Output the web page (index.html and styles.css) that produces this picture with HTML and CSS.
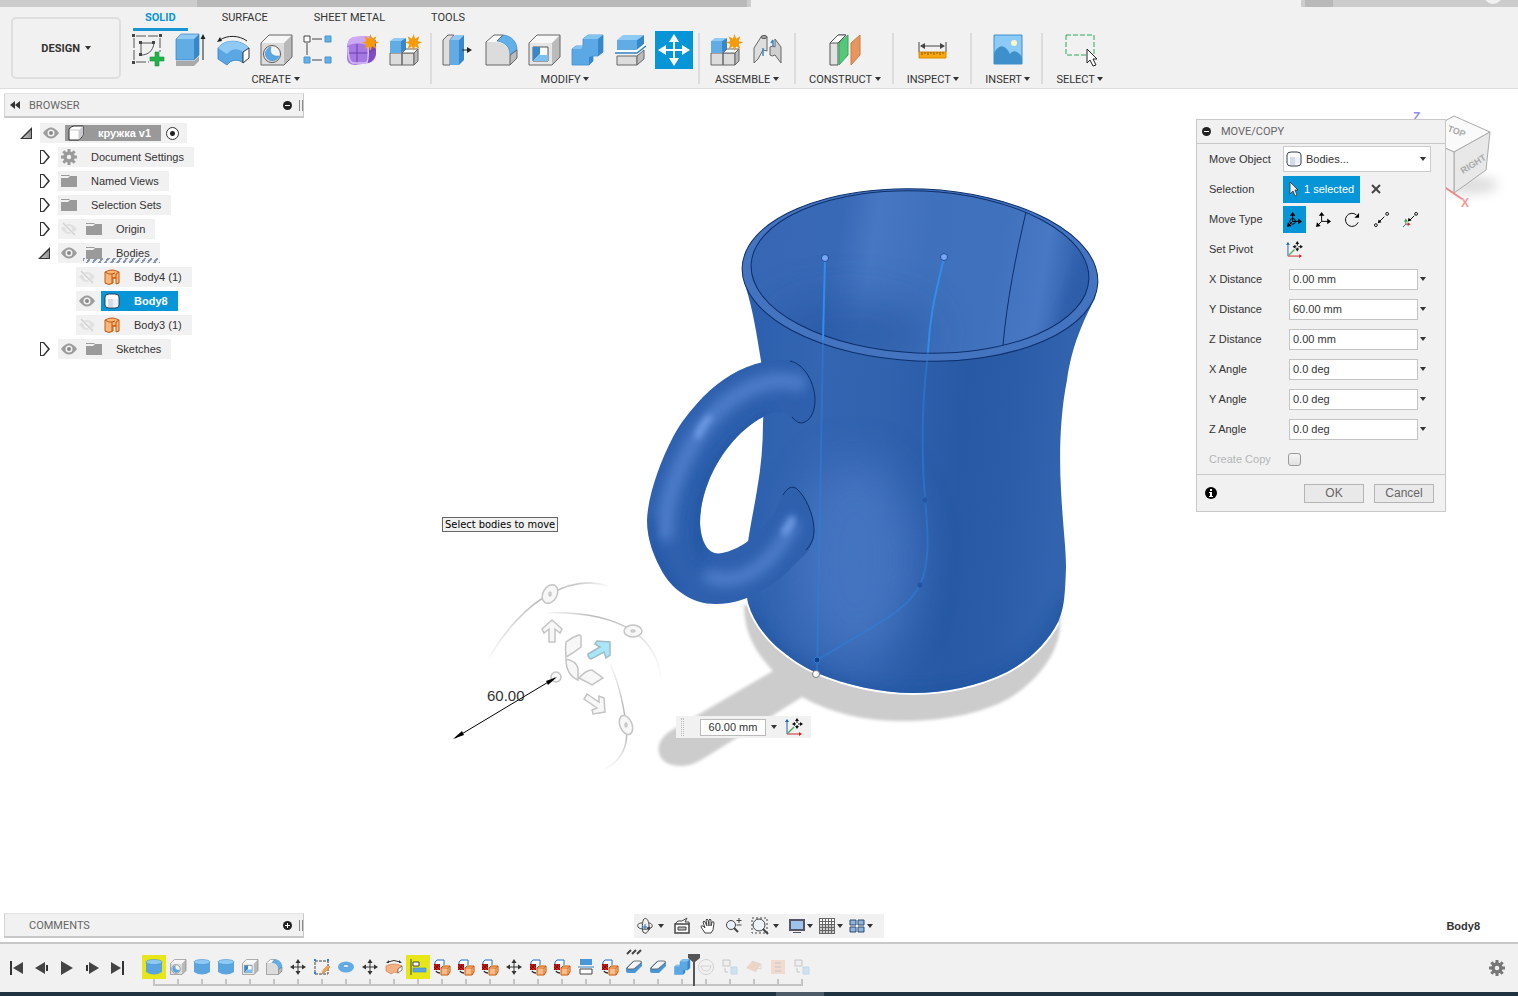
FILE: index.html
```html
<!DOCTYPE html>
<html lang="en">
<head>
    <meta charset="UTF-8">
    <meta name="viewport" content="width=device-width, initial-scale=1.0">
    <title>кружка v1</title>
    <link rel="stylesheet" href="styles.css">
</head>
<body>
    <!-- Icon sprite -->
    <svg class="sprite" width="0" height="0" aria-hidden="true">
        <symbol id="i-sketch" viewBox="0 0 32 32">
            <path d="M5 2h23M3 4v23M5 28h13M29 4v14" fill="none" stroke="#555" stroke-dasharray="10 2"/>
            <path d="M10 9h13M10 9v12M10 21c7 0 12-4 13-12" fill="none" stroke="#555"/>
            <path d="M1 0h3v3H1zM28 0h3v3h-3zM1 27h3v3H1zM8 7h3v3H8zM21 7h3v3h-3zM8 19h3v3H8z" fill="#444"/>
            <path d="M24 18h4v5h5v4h-5v5h-4v-5h-5v-4h5z" fill="#22b14c" stroke="#15933a" stroke-width=".6"/>
        </symbol>
        <symbol id="i-extrude" viewBox="0 0 32 32">
            <path d="M2 27h18l5-5v5l-5 5H2z" fill="#a9a9a9"/>
            <path d="M2 5h18v21H2z" fill="#62ace6"/>
            <path d="M2 5l5-5h18l-5 5z" fill="#8fcaf5"/>
            <path d="M20 5l5-5v21l-5 5z" fill="#3787cb"/>
            <path d="M2 5l5-5h18v21l-5 5H2z" fill="none" stroke="#3580c0" stroke-width=".7"/>
            <path d="M29 3v23" stroke="#222"/><path d="M29 0l2.500 5h-5z" fill="#222"/>
        </symbol>
        <symbol id="i-revolve" viewBox="0 0 32 32">
            <path d="M1 14C8 5 23 5 32 14l-6 4v11c-4-4-12-4-16 2L1 25z" fill="#5aa7e4" stroke="#2f7fc0" stroke-width=".8"/>
            <path d="M1 14C8 5 23 5 32 14l-6 4c-4-4-12-4-16 2z" fill="#8fcaf5"/>
            <path d="M26 18l6-4v10l-6 5z" fill="#fff" stroke="#333"/>
            <path d="M3 6C10 1 22 1 30 7" fill="none" stroke="#222"/><path d="M0 8l3-5 2 4z" fill="#222"/>
        </symbol>
        <symbol id="i-hole" viewBox="0 0 32 32">
            <path d="M1 9h23v22H1z" fill="#dcdcdc"/><path d="M1 9l8-8h23l-8 8z" fill="#f6f6f6"/><path d="M24 9l8-8v22l-8 8z" fill="#b9b9b9"/>
            <path d="M1 9l8-8h23v22l-8 8H1z" fill="none" stroke="#666"/>
            <circle cx="12" cy="20" r="8.500" fill="#f3f3f3" stroke="#555"/>
            <path d="M11 13a7 7 0 1 0 8 9c-7 1-10-4-8-9z" fill="#5aa7e4" stroke="#2f7fc0" stroke-width=".5"/>
        </symbol>
        <symbol id="i-pattern" viewBox="0 0 32 32">
            <path d="M9 5h10M9 26h10M4 9v12" stroke="#444"/>
            <path d="M1 2h6v6H1z" fill="#fff" stroke="#444"/>
            <path d="M22 2h6v6h-6zM1 23h6v6H1zM22 23h6v6h-6z" fill="#62b0ea" stroke="#4a94cf"/>
        </symbol>
        <symbol id="i-star" viewBox="0 0 16 16">
            <path d="M8 0l1.500 4.500L13.500 2l-1.500 4.500 4 1.500-4 1.500 1.500 4.500-4-2.500L8 16l-1.500-4.500-4 2.500L4 9.500 0 8l4-1.500L2.500 2l4 2.500z" fill="#f59a0b"/>
        </symbol>
        <symbol id="i-form" viewBox="0 0 32 32">
            <path d="M1 12Q2 4 8 3l14-1q8 1 8 9v10q-1 6-7 8l-14 2q-8 0-8-7z" fill="#a678e2"/>
            <path d="M1 12Q2 4 8 3l14-1q4 1 5 4l-6 5Q10 7 1 12z" fill="#cda9f5"/>
            <path d="M22 11l8-5v14q-2 7-8 9z" fill="#7d4cc0"/>
            <path d="M11 10v20M2 19h19l8-4" fill="none" stroke="#6b3eae"/>
            <path d="M2 13q0 15 5 16h13q3-1 2-18" fill="none" stroke="#d9bff8" stroke-width="1.500"/>
            <use href="#i-star" x="16" y="0" width="17" height="17"/>
        </symbol>
        <symbol id="i-component" viewBox="0 0 32 32">
            <path d="M1 19h12v12H1zM13 19h12v12H13z" fill="#dcdcdc" stroke="#666"/>
            <path d="M13 19l4-4h12l-4 4z" fill="#fff" stroke="#666"/><path d="M25 19l4-4v12l-4 4z" fill="#b9b9b9" stroke="#666"/>
            <path d="M1 7h11v12H1z" fill="#62ace6"/><path d="M1 7l4-3h12l-5 3z" fill="#8fcaf5"/><path d="M12 7l5-3v11l-5 4z" fill="#3787cb"/>
            <use href="#i-star" x="16" y="0" width="17" height="17"/>
        </symbol>
        <symbol id="i-presspull" viewBox="0 0 32 32">
            <path d="M1 6l5-5h6L8 6v25H1z" fill="#dedede" stroke="#666"/>
            <path d="M8 6h9v25H8z" fill="#62ace6"/><path d="M8 6l5-5h9l-5 5z" fill="#8fcaf5"/><path d="M17 6l5-5v25l-5 5z" fill="#3787cb"/>
            <path d="M20 16h8" stroke="#222"/><path d="M30 16l-5-3v6z" fill="#222"/>
        </symbol>
        <symbol id="i-fillet" viewBox="0 0 32 32">
            <path d="M1 8h9c9 0 15 7 15 14v9H1z" fill="#dcdcdc"/><path d="M1 8l8-7h9l-6 7z" fill="#f8f8f8"/>
            <path d="M25 21l7-5v8l-7 7z" fill="#bbb"/>
            <path d="M12 7l6-6c9 1 14 7 14 15l-7 5C25 13 20 8 12 7z" fill="#62b0ea" stroke="#3787cb" stroke-width=".7"/>
            <path d="M12 7l6-6H9L1 8v23h24l7-7v-8l-7 5v10" fill="none" stroke="#666"/>
        </symbol>
        <symbol id="i-shell" viewBox="0 0 32 32">
            <path d="M1 9h23v22H1z" fill="#e6e6e6"/><path d="M1 9l8-8h23l-8 8z" fill="#f8f8f8"/><path d="M24 9l8-8v22l-8 8z" fill="#bbb"/>
            <path d="M1 9l8-8h23v22l-8 8H1z" fill="none" stroke="#666"/>
            <path d="M5 13h15v14H5z" fill="#fff" stroke="#555"/><path d="M5 13h7v7l-7 7z" fill="#3787cb"/><path d="M5 27l6-6h9v6z" fill="#7cc0f2"/>
        </symbol>
        <symbol id="i-combine" viewBox="0 0 32 32">
            <path d="M1 15l4-3h7V5l5-4h15v17l-5 4h-5v5l-4 4H1z" fill="#5ba8e4" stroke="#3f8fd2" stroke-width=".8"/>
            <path d="M12 5l5-4h15l-5 4zM1 15l4-3h7l-2 3z" fill="#83c3f2"/>
            <path d="M27 5l5-4v17l-5 4zM18 23l4-1v5l-4 4z" fill="#3787cb"/>
        </symbol>
        <symbol id="i-split" viewBox="0 0 32 32">
            <path d="M3 6h20v10H3z" fill="#62ace6"/><path d="M3 6l6-5h21l-7 5z" fill="#8fcaf5"/><path d="M23 6l7-5v9l-7 6z" fill="#3787cb"/>
            <path d="M1 18h22l9-7" fill="none" stroke="#fff" stroke-width="4"/>
            <path d="M1 19h22l9-7" fill="none" stroke="#2f7fc0" stroke-width="1.500"/>
            <path d="M3 22h20v9H3z" fill="#dcdcdc" stroke="#666"/><path d="M23 22l7-6v9l-7 6z" fill="#bbb" stroke="#666"/>
        </symbol>
        <symbol id="i-move" viewBox="0 0 32 32">
            <path d="M16 5v22M5 16h22" stroke="currentColor" stroke-width="2"/>
            <path d="M16 0l5 8H11zM16 32l5-8H11zM0 16l8-5v10zM32 16l-8-5v10z" fill="currentColor"/>
        </symbol>
        <symbol id="i-joint" viewBox="0 0 32 32">
            <path d="M1 14l7-11q3-3 6 0v14l-4-1-5 9-4 4z" fill="#dedede" stroke="#666"/>
            <ellipse cx="11" cy="3" rx="3" ry="1.500" fill="#aaa" stroke="#555"/>
            <path d="M17 13q3-2 5 0V5l6 8v16l-6-8q-3 2-5 0z" fill="#cfcfcf" stroke="#666"/>
            <path d="M10 14v8M20 6v7M18 9l2-3" fill="none" stroke="#3787cb" stroke-width="1.500"/>
        </symbol>
        <symbol id="i-plane" viewBox="0 0 32 32">
            <path d="M1 9l8-8h8l-8 8v22H1z" fill="#e2e2e2" stroke="#555"/><path d="M1 9l8-8h8l-8 8z" fill="#fff" stroke="#555"/>
            <path d="M10 9l9-8v20l-9 10z" fill="#53c77a" stroke="#36a75c"/>
            <path d="M22 9l9-8v20l-9 10z" fill="#e8965f" stroke="#cf7b43"/>
        </symbol>
        <symbol id="i-measure" viewBox="0 0 32 32">
            <path d="M2 8v10M29 8v10M4 12h23" stroke="#444"/><path d="M3 12l5-3v6zM28 12l-5-3v6z" fill="#444"/>
            <path d="M2 18h27v6H2z" fill="#f7a70a" stroke="#d98b00"/><path d="M5 18v3M8 18v2M11 18v3M14 18v2M17 18v3M20 18v2M23 18v3M26 18v2" stroke="#8a5500"/>
        </symbol>
        <symbol id="i-image" viewBox="0 0 32 32">
            <path d="M2 1h28v29H2z" fill="#8ccaf8"/><circle cx="22" cy="9" r="3" fill="#fdf6c6"/>
            <path d="M2 19c5-9 11-9 16 1 3-4 7-4 12 3v7H2z" fill="#3e90cc"/><path d="M2 1h28v29H2z" fill="none" stroke="#3e90cc"/>
        </symbol>
        <symbol id="i-select" viewBox="0 0 32 32">
            <path d="M2 1h28v20H2z" fill="none" stroke="#2fa85a" stroke-dasharray="5 2"/>
            <path d="M23 15v14l3-3 3 6 3-1-3-6h4z" fill="#fff" stroke="#222"/>
        </symbol>
        <symbol id="i-eye" viewBox="0 0 16 16">
            <path d="M0 8q8-11 16 0-8 11-16 0z" fill="#9c9c9c"/><circle cx="8" cy="8" r="3.500" fill="#f1f1f1"/><circle cx="8" cy="8" r="2" fill="#8a8a8a"/>
        </symbol>
        <symbol id="i-eyeoff" viewBox="0 0 16 16">
            <path d="M0 8q8-10 16 0-8 10-16 0z" fill="#e0e0e0"/><circle cx="8" cy="8" r="3" fill="#f1f1f1"/><path d="M2 3l12 11" stroke="#f1f1f1" stroke-width="3"/><path d="M2 2l12 12" stroke="#d2d2d2" stroke-width="1.500"/>
        </symbol>
        <symbol id="i-folder" viewBox="0 0 16 16">
            <path d="M0 2h8l1 1H0zM0 5h7l2-2h7v11H0z" fill="#9a9a9a"/>
        </symbol>
        <symbol id="i-gear" viewBox="0 0 16 16">
            <circle cx="8" cy="8" r="4" fill="none" stroke="currentColor" stroke-width="3.500"/>
            <path d="M8 0v3M8 13v3M0 8h3M13 8h3M2.300 2.300l2.200 2.200M11.500 11.500l2.200 2.200M2.300 13.700l2.200-2.200M11.500 4.500l2.200-2.200" stroke="currentColor" stroke-width="3"/>
        </symbol>
        <symbol id="i-cube" viewBox="0 0 16 16">
            <path d="M1 4q3-3 5-3h9v9q-2 4-4 5H1z" fill="#fff" stroke="#333"/><path d="M11 5l4-4v9l-4 5z" fill="#c9c9d2"/><path d="M2 5h9v9" fill="none" stroke="#ccc"/>
        </symbol>
        <symbol id="i-body" viewBox="0 0 16 16">
            <path d="M1 4q0-3 4-3h6q4 0 4 3v8q0 3-4 3H5q-4 0-4-3z" fill="#fff" stroke="#333f50"/><path d="M4 6h5v8H4z" fill="#d5dbe6"/><path d="M9 6h5v6l-5 2z" fill="#edf0f6"/>
        </symbol>
        <symbol id="i-surface" viewBox="0 0 16 16">
            <path d="M1 3q7-4 14 0v11l-3 1V9H9v5q-4 3-8 0z" fill="#f9b77b" stroke="#c9560a"/><path d="M1 3q4 3 7 2v9M8 9h4V5l3-2M8 5l3-1" fill="none" stroke="#c9560a"/>
        </symbol>
        <symbol id="i-cyl" viewBox="0 0 16 16">
            <path d="M0 3v10q8 5 16 0V3z" fill="#5aa5e0"/><ellipse cx="8" cy="3" rx="8" ry="2.500" fill="#8fcaf5" stroke="#4a94cf" stroke-width=".6"/>
        </symbol>
        <symbol id="i-sketchedit" viewBox="0 0 16 16">
            <path d="M1 2h13v13H1z" fill="none" stroke="#444" stroke-dasharray="3 1"/><path d="M0 0h2v2H0zM13 0h2v2h-2zM0 13h2v2H0z" fill="#2f7fd0"/><path d="M8 15l1-4 5-5 2 2-5 5z" fill="#f5a54a" stroke="#d57b55" stroke-width=".6"/>
        </symbol>
        <symbol id="i-torus" viewBox="0 0 16 16">
            <ellipse cx="8" cy="8" rx="8" ry="5.500" fill="#62ace6"/><ellipse cx="8" cy="7" rx="3" ry="1.500" fill="#f1f1f1" stroke="#3787cb" stroke-width=".7"/>
        </symbol>
        <symbol id="i-sweep" viewBox="0 0 16 16">
            <path d="M0 7q8-4 16 0l-4 3v4q-4-2-7 1l-5-3z" fill="#f4b183" stroke="#d98046" stroke-width=".7"/><path d="M12 10l4-3v4l-4 3z" fill="#fff" stroke="#555" stroke-width=".7"/><path d="M2 3q6-3 12 0" fill="none" stroke="#333"/><path d="M0 4l3-3v3zM16 4l-3-3v3z" fill="#333"/>
        </symbol>
        <symbol id="i-align" viewBox="0 0 16 16">
            <path d="M1 0v16" stroke="#444"/><path d="M3 3h6v4H3z" fill="#fff" stroke="#444"/><path d="M3 9h13v4H3z" fill="#5aa5e0" stroke="#3787cb" stroke-width=".6"/>
        </symbol>
        <symbol id="i-copy" viewBox="0 0 16 16">
            <path d="M1 5V3l2-2h7v5" fill="#fff" stroke="#1f6fc0"/>
            <path d="M0 5h6v6H0z" fill="#e01818"/><path d="M0 5l6 6M6 5l-6 6M0 8l3 3M3 5l3 3" stroke="#3a0505" stroke-width=".7"/>
            <path d="M7 9l2-2h7v6l-2 3H7z" fill="#f9bb88" stroke="#c9560a"/><path d="M7 9h7v7M14 9l2-2" fill="none" stroke="#c9560a" stroke-width=".7"/><path d="M2 12q1 2 4 2" fill="none" stroke="#222" stroke-width="1.500"/>
        </symbol>
        <symbol id="i-splitface" viewBox="0 0 16 16">
            <path d="M2 0h12v6H2z" fill="#4a97d8"/><path d="M0 8h16" stroke="#3787cb"/><path d="M2 10h12v5H2z" fill="#fff" stroke="#444"/>
        </symbol>
        <symbol id="i-slab" viewBox="0 0 16 16">
            <path d="M0 9l7-7h7q2 0 2 2v3l-7 7H2q-2 0-2-2z" fill="#4a97d8"/><path d="M1 9l7-7h6q2 0 1 2L9 9q-1 1-2 1H2q-1 0-1-1z" fill="#f4f4f4" stroke="#555" stroke-width=".8"/>
        </symbol>
        <symbol id="i-face" viewBox="0 0 16 16">
            <circle cx="8" cy="8" r="7.500" fill="none" stroke="#999"/><path d="M3 7h10q-1 5-5 5T3 7z" fill="none" stroke="#999"/>
        </symbol>
        <symbol id="i-newcomp" viewBox="0 0 16 16">
            <path d="M1 1h7v6H1z" fill="#eee" stroke="#777"/><path d="M3 9v4h3" fill="none" stroke="#777"/><path d="M9 8h6v7H9z" fill="#8cc5ee" stroke="#6aaee0"/>
        </symbol>
        <symbol id="i-patch" viewBox="0 0 16 16">
            <path d="M0 9l6-7 9 3-5 8z" fill="#e3a47b"/><path d="M6 2l9 3v5l-4-1" fill="none" stroke="#aaa"/>
        </symbol>
        <symbol id="i-rib" viewBox="0 0 16 16">
            <path d="M1 1h14v14H1z" fill="#f2b58f"/><path d="M5 4h6M5 8h6M5 12h6" stroke="#777"/>
        </symbol>
        <symbol id="i-pivot" viewBox="0 0 16 16">
            <path d="M1 1v14" stroke="#1565c0"/><path d="M1 0l2 3H-1z" fill="#1565c0"/><path d="M1 15h13" stroke="#c62828"/><path d="M16 15l-3-2v4z" fill="#c62828"/><path d="M2 14l6-6" stroke="#4caf50" stroke-width="1.500"/>
            <path d="M11 0v9M7 5h9" stroke="#111"/><path d="M11-1l2 3H9zM11 10l2-3H9zM6 5l3-2v4zM17 5l-3-2v4z" fill="#111"/><path d="M10 4h2v2h-2z" fill="#fff"/>
        </symbol>
    </svg>

    <div class="window-tabs">
        <span class="tab-first"></span>
        <span class="tab-second"></span>
        <span class="tab-gap"></span>
        <span class="tab-active"></span>
        <span class="tab-gap"></span>
        <span class="tab-new"></span>
        <span class="tab-rest"><i class="avatar"></i></span>
    </div>

    <header class="ribbon">
        <button class="workspace" type="button">DESIGN <i class="caret"></i></button>
        <div class="tools">
            <nav class="tabs">
                <a href="#" class="active">SOLID</a>
                <a href="#">SURFACE</a>
                <a href="#">SHEET METAL</a>
                <a href="#">TOOLS</a>
            </nav>
            <div class="groups">
                <section class="group">
                    <div class="icons">
                        <button aria-label="Create Sketch"><svg><use href="#i-sketch"/></svg></button>
                        <button aria-label="Extrude"><svg><use href="#i-extrude"/></svg></button>
                        <button aria-label="Revolve"><svg><use href="#i-revolve"/></svg></button>
                        <button aria-label="Hole"><svg><use href="#i-hole"/></svg></button>
                        <button aria-label="Pattern"><svg><use href="#i-pattern"/></svg></button>
                        <button aria-label="Create Form"><svg><use href="#i-form"/></svg></button>
                        <button aria-label="Derive"><svg><use href="#i-component"/></svg></button>
                    </div>
                    <button class="menu">CREATE <i class="caret"></i></button>
                </section>
                <section class="group">
                    <div class="icons">
                        <button aria-label="Press Pull"><svg><use href="#i-presspull"/></svg></button>
                        <button aria-label="Fillet"><svg><use href="#i-fillet"/></svg></button>
                        <button aria-label="Shell"><svg><use href="#i-shell"/></svg></button>
                        <button aria-label="Combine"><svg><use href="#i-combine"/></svg></button>
                        <button aria-label="Split Body"><svg><use href="#i-split"/></svg></button>
                        <button aria-label="Move/Copy" class="on"><svg><use href="#i-move"/></svg></button>
                    </div>
                    <button class="menu">MODIFY <i class="caret"></i></button>
                </section>
                <section class="group">
                    <div class="icons">
                        <button aria-label="New Component"><svg><use href="#i-component"/></svg></button>
                        <button aria-label="Joint"><svg><use href="#i-joint"/></svg></button>
                    </div>
                    <button class="menu">ASSEMBLE <i class="caret"></i></button>
                </section>
                <section class="group single">
                    <div class="icons"><button aria-label="Offset Plane"><svg><use href="#i-plane"/></svg></button></div>
                    <button class="menu">CONSTRUCT <i class="caret"></i></button>
                </section>
                <section class="group single">
                    <div class="icons"><button aria-label="Measure"><svg><use href="#i-measure"/></svg></button></div>
                    <button class="menu">INSPECT <i class="caret"></i></button>
                </section>
                <section class="group single">
                    <div class="icons"><button aria-label="Canvas"><svg><use href="#i-image"/></svg></button></div>
                    <button class="menu">INSERT <i class="caret"></i></button>
                </section>
                <section class="group single">
                    <div class="icons"><button aria-label="Select"><svg><use href="#i-select"/></svg></button></div>
                    <button class="menu">SELECT <i class="caret"></i></button>
                </section>
            </div>
        </div>
    </header>

    <main class="viewport">
        <!-- Model canvas -->
        <svg class="canvas" viewBox="0 89 1518 853">
            <defs>
                <linearGradient id="body" x1="742" x2="1098" y1="0" y2="30" gradientUnits="userSpaceOnUse">
                    <stop offset="0" stop-color="#2a5eac"/><stop offset=".1" stop-color="#2c60ae"/><stop offset=".3" stop-color="#3365b1"/><stop offset=".5" stop-color="#3062ae"/>
                    <stop offset=".72" stop-color="#2759a4"/><stop offset=".85" stop-color="#2a5ca8"/><stop offset="1" stop-color="#3163ae"/>
                </linearGradient>
                <linearGradient id="inside" x1="751" x2="1089" y1="250" y2="290" gradientUnits="userSpaceOnUse">
                    <stop offset="0" stop-color="#3767b4"/><stop offset=".25" stop-color="#3869b7"/><stop offset=".35" stop-color="#4777c2"/><stop offset=".52" stop-color="#3f70bb"/>
                    <stop offset=".72" stop-color="#4071bc"/><stop offset=".86" stop-color="#4878c4"/><stop offset=".94" stop-color="#3565b0"/><stop offset="1" stop-color="#2f60ab"/>
                </linearGradient>
                <linearGradient id="fade" x1="0" x2="1" y1="0" y2="0">
                    <stop offset="0" stop-color="#bbb" stop-opacity=".1"/><stop offset=".4" stop-color="#bbb"/><stop offset=".75" stop-color="#ccc"/><stop offset="1" stop-color="#ccc" stop-opacity=".1"/>
                </linearGradient>
                <linearGradient id="fadeY" x1="0" x2="0" y1="0" y2="1">
                    <stop offset="0" stop-color="#ccc" stop-opacity=".1"/><stop offset=".4" stop-color="#bbb"/><stop offset=".7" stop-color="#bbb"/><stop offset="1" stop-color="#ccc" stop-opacity=".1"/>
                </linearGradient>
                <filter id="soft2"><feGaussianBlur stdDeviation="1.500"/></filter>
                <filter id="soft3" x="-50%" y="-50%" width="200%" height="200%"><feGaussianBlur stdDeviation="3"/></filter>
                <filter id="soft6" x="-50%" y="-50%" width="200%" height="200%"><feGaussianBlur stdDeviation="6"/></filter>
                <filter id="soft20" x="-100%" y="-100%" width="300%" height="300%"><feGaussianBlur stdDeviation="22"/></filter>
                <path id="mug" d="M742 270L746 288C753 310 757 336 761 361C764 385 764 405 763 423C763 445 761 468 757 490C753 515 748 535 746 560C745 580 746 593 748 603C753 620 763 634 777 647C790 658 803 667 817 673C846 685 880 693 913 693C946 693 978 686 1007 672C1033 658 1048 641 1058 622C1064 608 1065 598 1066 567C1066 548 1063 528 1061 490C1059 455 1060 415 1067 380C1072 345 1083 322 1095 298L1098 282Z"/>
                <path id="grip" d="M792 361C782 359 772 360 763 362C740 367 720 380 703 397C688 413 680 424 673 437C660 462 648 495 647 520C647 541 655 559 663 573C674 591 693 604 715 604C735 604 749 598 763 590C778 582 786 573 797 562C805 555 814 548 814 530C814 514 805 496 797 489C792 485 787 488 783 495C777 508 773 518 763 527C755 537 739 550 722 553C710 556 701 545 700 523C700 508 704 493 708 483C718 457 738 430 763 417C770 412 780 411 787 413C791 415 792 423 802 423C811 421 815 411 815 400C815 384 805 364 792 361Z"/>
                <clipPath id="mugClip"><use href="#mug"/></clipPath>
                <clipPath id="gripClip"><use href="#grip"/></clipPath>
                <clipPath id="insideClip"><ellipse cx="920" cy="272" rx="169" ry="81" transform="rotate(2.500 920 272)"/></clipPath>
            </defs>

            <path filter="url(#soft2)" fill="#ccc" d="M744 605C744 635 758 655 773 671L672 730C650 743 656 767 682 766C690 766 698 762 706 757L802 697C835 715 870 722 910 721C950 720 985 712 1010 698C1045 675 1063 645 1060 615Z"/>
            <path d="M748 603C753 620 763 634 777 647C790 658 803 667 817 673C846 685 880 693 913 693C946 693 978 686 1007 672C1033 658 1048 641 1058 622" fill="none" stroke="#fff" stroke-width="4"/>

            <use href="#mug" fill="url(#body)"/>
            <g clip-path="url(#mugClip)">
                <ellipse cx="855" cy="560" rx="60" ry="100" fill="#4878c4" opacity=".8" filter="url(#soft20)"/>
                <path d="M745 610C780 675 850 698 913 698S1040 680 1068 600" fill="none" stroke="#1f539f" stroke-width="20" opacity=".5" filter="url(#soft6)"/>
            </g>
            <ellipse cx="920" cy="275" rx="178" ry="86" transform="rotate(2.500 920 275)" fill="#4473bf" stroke="#0d2f6b"/>
            <ellipse cx="920" cy="272" rx="169" ry="81" transform="rotate(2.500 920 272)" fill="url(#inside)"/>
            <g clip-path="url(#insideClip)">
                <ellipse cx="850" cy="335" rx="80" ry="35" fill="#2556a2" opacity=".7" filter="url(#soft20)"/>
                <ellipse cx="1076" cy="290" rx="8" ry="50" fill="#2a5aa6" opacity=".6" filter="url(#soft6)" transform="rotate(20 1076 290)"/>
            </g>
            <ellipse cx="920" cy="272" rx="169" ry="81" transform="rotate(2.500 920 272)" fill="none" stroke="#0d2f6b"/>
            <path d="M1026 212C1016 255 1007 300 1003 345" fill="none" stroke="#0d2f6b"/>

            <use href="#grip" fill="#2e60ae"/>
            <g clip-path="url(#gripClip)" fill="none">
                <path d="M805 385C765 370 722 398 698 435C676 470 662 505 666 540" stroke="#4d7dca" stroke-width="16" filter="url(#soft6)"/>
                <path d="M705 575C735 588 770 572 795 520" stroke="#4d7dca" stroke-width="14" filter="url(#soft6)"/>
                <path d="M697 438Q702 424 711 416" stroke="#7fa9f2" stroke-width="5" filter="url(#soft3)"/>
                <path d="M783 534Q789 527 793 517" stroke="#7fa9f2" stroke-width="5" filter="url(#soft3)"/>
                <path d="M680 590Q650 560 652 520" stroke="#2456a3" stroke-width="8" filter="url(#soft3)" opacity=".6"/>
                <path d="M702 560Q692 530 704 490Q720 445 770 415" stroke="#2456a3" stroke-width="10" filter="url(#soft6)"/>
            </g>
            <path d="M790 361C805 364 815 384 815 400C815 411 811 421 802 423C797 423 795 420 792 417M783 495C787 488 792 485 797 489C805 496 814 514 814 530C814 538 812 544 806 550" fill="none" stroke="#0d2f6b"/>

            <!-- sketch curves -->
            <g fill="none" stroke="#2f7fdc" stroke-width="2">
                <path d="M825 258L823 340M944 257C938 285 930 310 928 352" stroke="#338cec"/>
                <path d="M823 340L817 674M928 352C922 400 921 450 925 500C929 540 929 565 920 585C908 610 880 622 817 660" opacity=".5"/>
            </g>
            <circle cx="825" cy="258" r="3.500" fill="#7aa7f5" stroke="#1d4f9c"/>
            <circle cx="944" cy="257" r="3.500" fill="#7aa7f5" stroke="#1d4f9c"/>
            <g fill="#24549f" stroke="#2a67bb"><circle cx="925" cy="500" r="3"/><circle cx="920" cy="585" r="3"/></g>
            <circle cx="817" cy="660" r="3" fill="#163f85" stroke="#2f7fdc"/>
            <circle cx="816" cy="674" r="3.500" fill="#fff" stroke="#777"/>

            <!-- move manipulator -->
            <g fill="none" stroke-width="1.500">
                <path d="M489 658C505 630 528 605 550 594C570 583 590 580 608 586" stroke="url(#fade)"/>
                <path d="M548 613C580 612 610 617 633 631C650 643 659 660 661 678" stroke="url(#fade)"/>
                <path d="M609 662C618 680 623 700 626 725C629 745 622 760 605 769" stroke="url(#fadeY)"/>
            </g>
            <g fill="#f7f7f7" stroke="#c4c4c4" stroke-width="1.500">
                <ellipse cx="550" cy="594" rx="7" ry="10" transform="rotate(30 550 594)"/>
                <ellipse cx="633" cy="631" rx="9" ry="6"/>
                <ellipse cx="626" cy="725" rx="6" ry="10" transform="rotate(-22 626 725)"/>
                <ellipse cx="550" cy="594" rx="1" ry="2"/><ellipse cx="633" cy="631" rx="2" ry="1"/><ellipse cx="626" cy="725" rx="1" ry="2"/>
                <path d="M552 620l10 9-2 4-5-4v13h-6v-13l-5 4-2-4z"/>
                <path d="M587 694l12 8 0-6 5 2 1 14-12 2-1-4 5-2-13-9z"/>
                <path d="M566 642q6-5 13-7 2 0 2 2v10q-6 5-15 10-1-8 0-15zM566 659q10 2 12 9v12q-12-5-12-21zM579 678q7-8 13-8l11 8-11 7z"/>
                <circle cx="556" cy="677" r="5"/>
            </g>
            <path d="M588 654l12-7-5-3 2-3 13 1 0 13-4 3-2-6-13 7q-3-1-3-5z" fill="#a9e6fa" stroke="#a0bcc8" stroke-width="1.500"/>
            <path d="M455 738L555 678" stroke="#000"/>
            <path d="M453 739l9-8 2 4zM557 677l-11 4 2 4z"/>
            <text class="dimension" x="487" y="701">60.00</text>
        </svg>

        <!-- View cube -->
        <svg class="viewcube" width="92" height="110" viewBox="1408 106 92 110">
            <ellipse cx="1470" cy="185" rx="28" ry="9" fill="#ddd" filter="url(#soft6)"/>
            <path d="M1418 136l36-20 36 16-36 20z" fill="#fafafa" stroke="#aaa"/>
            <path d="M1454 152l36-20-4 38-32 23z" fill="#e8e8e8" stroke="#aaa"/>
            <path d="M1418 136l36 16v41l-32-19z" fill="#efefef" stroke="#aaa"/>
            <text class="cube-face" x="1447" y="131" transform="rotate(20 1447 131)">TOP</text>
            <text class="cube-face" x="1463" y="174" transform="rotate(-32 1463 174)">RIGHT</text>
            <path d="M1440 184l22 15" stroke="#f08a8a" stroke-width="2"/>
            <text class="axis-z" x="1413" y="121">Z</text>
            <text class="axis-x" x="1461" y="207">X</text>
        </svg>

        <!-- Browser -->
        <aside class="browser">
            <div class="panel-head">
                <svg width="10" height="8" viewBox="0 0 10 8"><path d="M5 0v8L0 4zM10 0v8L5 4z" fill="#333"/></svg>
                <span class="grow">BROWSER</span>
                <button class="round" aria-label="Collapse browser"><svg width="9" height="9" viewBox="0 0 9 9"><circle cx="4.500" cy="4.500" r="4.500" fill="#222"/><path d="M2 4.500h5" stroke="#fff"/></svg></button>
                <i class="grip"></i>
            </div>
            <ul class="tree">
                <li class="root"><button class="toggle open" aria-label="Collapse"></button>
                    <div class="node"><svg class="eye"><use href="#i-eye"/></svg><span class="item doc"><svg><use href="#i-cube"/></svg>кружка v1</span><input type="radio" checked aria-label="Activate кружка v1"></div></li>
                <li><button class="toggle" aria-label="Expand"></button>
                    <div class="node"><span class="item"><svg class="gear"><use href="#i-gear"/></svg>Document Settings</span></div></li>
                <li><button class="toggle" aria-label="Expand"></button>
                    <div class="node"><span class="item"><svg><use href="#i-folder"/></svg>Named Views</span></div></li>
                <li><button class="toggle" aria-label="Expand"></button>
                    <div class="node"><span class="item"><svg><use href="#i-folder"/></svg>Selection Sets</span></div></li>
                <li><button class="toggle" aria-label="Expand"></button>
                    <div class="node"><svg class="eye"><use href="#i-eyeoff"/></svg><span class="item"><svg><use href="#i-folder"/></svg>Origin</span></div></li>
                <li><button class="toggle open" aria-label="Collapse"></button>
                    <div class="node"><svg class="eye"><use href="#i-eye"/></svg><span class="item hatched"><svg><use href="#i-folder"/></svg>Bodies</span></div></li>
                <li class="leaf">
                    <div class="node"><svg class="eye"><use href="#i-eyeoff"/></svg><span class="item"><svg><use href="#i-surface"/></svg>Body4 (1)</span></div></li>
                <li class="leaf">
                    <div class="node"><svg class="eye"><use href="#i-eye"/></svg><span class="item selected"><svg><use href="#i-body"/></svg>Body8</span></div></li>
                <li class="leaf">
                    <div class="node"><svg class="eye"><use href="#i-eyeoff"/></svg><span class="item"><svg><use href="#i-surface"/></svg>Body3 (1)</span></div></li>
                <li><button class="toggle" aria-label="Expand"></button>
                    <div class="node"><svg class="eye"><use href="#i-eye"/></svg><span class="item"><svg><use href="#i-folder"/></svg>Sketches</span></div></li>
            </ul>
        </aside>

        <div class="hint">Select bodies to move</div>

        <div class="quick-input">
            <i class="drag"></i>
            <input type="text" value="60.00 mm" aria-label="Y Distance">
            <button aria-label="Distance options"><i class="caret"></i></button>
            <button aria-label="Set Pivot"><svg><use href="#i-pivot"/></svg></button>
        </div>

        <!-- Move/Copy dialog -->
        <form class="dialog">
            <div class="dialog-head">
                <svg width="9" height="9" viewBox="0 0 9 9"><circle cx="4.500" cy="4.500" r="4.500" fill="#222"/><path d="M2 4.500h5" stroke="#fff"/></svg>
                MOVE/COPY
            </div>
            <div class="fields">
                <div class="row"><label for="object">Move Object</label>
                    <div class="pick"><svg><use href="#i-body"/></svg><select id="object"><option>Bodies...</option></select><i class="caret"></i></div></div>
                <div class="row"><span>Selection</span>
                    <div class="inline">
                        <button type="button" class="selection"><svg width="10" height="16" viewBox="0 0 10 16"><path d="M1 1v12l3-3 2 5 2-1-2-5h3z" fill="#eee" stroke="#333" stroke-width=".8"/></svg>1 selected</button>
                        <button type="button" class="clear" aria-label="Clear selection"><svg width="10" height="10" viewBox="0 0 10 10"><path d="M1 1l8 8M9 1L1 9" stroke="#444" stroke-width="2"/></svg></button>
                    </div></div>
                <div class="row"><span>Move Type</span>
                    <div class="types">
                        <button type="button" class="on" aria-label="Free Move"><svg viewBox="0 0 16 16"><path d="M6 10V2M6 10h9M6 10l-5 5" fill="none" stroke="#000"/><circle cx="6" cy="10" r="3" fill="none" stroke="#000"/><path d="M6 0l3 4H3zM16 10l-4-3v6zM0 16l1-5 4 4z"/></svg></button>
                        <button type="button" aria-label="Translate"><svg viewBox="0 0 16 16"><path d="M6 10V2M6 10h9M6 10l-5 5" fill="none" stroke="#000"/><path d="M6 0l3 4H3zM16 10l-4-3v6zM0 16l1-5 4 4z"/></svg></button>
                        <button type="button" aria-label="Rotate"><svg viewBox="0 0 16 16"><path d="M14 11A7 7 0 1 1 12 3" fill="none" stroke="#000"/><path d="M15 1v5h-5z"/></svg></button>
                        <button type="button" aria-label="Point to Point"><svg viewBox="0 0 16 16"><path d="M11 5L5 11" stroke="#000"/><path d="M4 12l1-4 3 3z"/><circle cx="14" cy="2" r="1.500" fill="#fff" stroke="#000"/><circle cx="2" cy="14" r="1.500" fill="#fff" stroke="#000"/></svg></button>
                        <button type="button" aria-label="Point to Position"><svg viewBox="0 0 16 16"><path d="M12 4L7 9" stroke="#000"/><path d="M5 10l1-4 3 3z"/><circle cx="14" cy="2" r="1.500" fill="#fff" stroke="#000"/><path d="M3 9v4" stroke="#2e9e3a"/><path d="M3 7l2 3H1z" fill="#2e9e3a"/><path d="M3 13h3" stroke="#c62828"/><path d="M8 13l-3-2v4z" fill="#c62828"/><path d="M3 13l-3 3" stroke="#1565c0"/></svg></button>
                    </div></div>
                <div class="row"><span>Set Pivot</span>
                    <div class="types"><button type="button" aria-label="Set Pivot"><svg><use href="#i-pivot"/></svg></button></div></div>
                <div class="row"><label for="xd">X Distance</label>
                    <div class="combo"><input type="text" id="xd" value="0.00 mm"><button type="button" aria-label="Options"><i class="caret"></i></button></div></div>
                <div class="row"><label for="yd">Y Distance</label>
                    <div class="combo"><input type="text" id="yd" value="60.00 mm"><button type="button" aria-label="Options"><i class="caret"></i></button></div></div>
                <div class="row"><label for="zd">Z Distance</label>
                    <div class="combo"><input type="text" id="zd" value="0.00 mm"><button type="button" aria-label="Options"><i class="caret"></i></button></div></div>
                <div class="row"><label for="xa">X Angle</label>
                    <div class="combo"><input type="text" id="xa" value="0.0 deg"><button type="button" aria-label="Options"><i class="caret"></i></button></div></div>
                <div class="row"><label for="ya">Y Angle</label>
                    <div class="combo"><input type="text" id="ya" value="0.0 deg"><button type="button" aria-label="Options"><i class="caret"></i></button></div></div>
                <div class="row"><label for="za">Z Angle</label>
                    <div class="combo"><input type="text" id="za" value="0.0 deg"><button type="button" aria-label="Options"><i class="caret"></i></button></div></div>
                <div class="row disabled"><label for="copy">Create Copy</label>
                    <input type="checkbox" id="copy" disabled></div>
            </div>
            <div class="dialog-foot">
                <svg width="12" height="12" viewBox="0 0 12 12"><circle cx="6" cy="6" r="6"/><path d="M5 2h2v2H5zM4 5h3v4h1v1H4V9h1V6H4z" fill="#fff"/></svg>
                <button type="button">OK</button>
                <button type="button">Cancel</button>
            </div>
        </form>

        <div class="bottom">
            <div class="panel-head comments">
                <span class="grow">COMMENTS</span>
                <button class="round" aria-label="Expand comments"><svg width="9" height="9" viewBox="0 0 9 9"><circle cx="4.500" cy="4.500" r="4.500" fill="#222"/><path d="M2 4.500h5M4.500 2v5" stroke="#fff"/></svg></button>
                <i class="grip"></i>
            </div>
            <div class="navbar">
                <button aria-label="Orbit"><svg viewBox="0 0 16 16" fill="none" stroke="#444"><path d="M5 5C1 5 0 7 1 9c2 3 12 3 14 0 1-2-1-4-3-4"/><path d="M6 14c3 3 6 0 6-6S9-1 7 1 5 12 6 14z"/><path d="M8 6v5M5 9h5" stroke="#1f6fc0"/><path d="M10 10l3-1-1 3z" fill="#444"/></svg><i class="caret"></i></button>
                <button aria-label="Look At"><svg viewBox="0 0 16 16" fill="#fff" stroke="#444"><path d="M1 6l3-3h4l5-3-2 4h4v2"/><path d="M1 6h14v9H1z" stroke-width="1.500"/><path d="M4 9h8v3H4z" fill="#bbb"/></svg></button>
                <button aria-label="Pan"><svg viewBox="0 0 16 16" fill="#fff" stroke="#444"><path d="M5 15L1 9q0-2 2-1l2 2-2-6q1-2 2 0l2 4-1-6q1-2 2 0l1 6V2q1-2 2 0v6l1-4q2-1 2 1l-1 7-2 3z"/></svg></button>
                <button aria-label="Zoom"><svg viewBox="0 0 16 16" fill="none" stroke="#444"><circle cx="5" cy="7" r="4.500" fill="#e8f1fa"/><path d="M8 10l4 4" stroke-width="2"/><path d="M13 0v5M10.500 2.500h5M10.500 7h5"/></svg></button>
                <button aria-label="Fit"><svg viewBox="0 0 16 16" fill="none" stroke="#444"><path d="M0 0h15v15H0z" stroke-dasharray="2 2"/><circle cx="7" cy="7" r="6" fill="#eef3f8"/><path d="M11 11l5 5" stroke-width="2"/></svg><i class="caret"></i></button>
                <button class="wide" aria-label="Display Settings"><svg viewBox="0 0 16 16"><path d="M0 1h16v12H0z" fill="#556"/><path d="M2 3h12v8H2z" fill="#9dc3ea"/><path d="M4 14h8v1H4z" fill="#556"/></svg><i class="caret"></i></button>
                <button class="wide" aria-label="Grid"><svg viewBox="0 0 16 16"><path d="M0 0h16v16H0z" fill="#fff"/><path d="M0 7h16v9H0z" fill="#ccc"/><path d="M.5 0v16M3.500 0v16M6.500 0v16M9.500 0v16M12.500 0v16M15.500 0v16M0 .5h16M0 3.500h16M0 6.500h16M0 9.500h16M0 12.500h16M0 15.500h16" stroke="#666"/></svg><i class="caret"></i></button>
                <button class="wide" aria-label="Viewports"><svg viewBox="0 0 16 16" fill="#8db4de" stroke="#2d4a6e"><path d="M1 2h6v5H1zM9 2h6v5H9zM1 9h6v5H1zM9 9h6v5H9z"/></svg><i class="caret"></i></button>
            </div>
            <div class="status">Body8</div>
        </div>
    </main>

    <footer class="timeline">
        <div class="playback">
            <button aria-label="Go to start"><svg viewBox="0 0 16 16"><path d="M2 1v14" stroke="#333" stroke-width="2"/><path d="M14 2v12L4 8z"/></svg></button>
            <button aria-label="Step back"><svg viewBox="0 0 16 16"><path d="M11 2v12L1 8z"/><path d="M13 5v6" stroke="#333" stroke-width="2"/></svg></button>
            <button aria-label="Play"><svg viewBox="0 0 16 16"><path d="M2 1v14l12-7z"/></svg></button>
            <button aria-label="Step forward"><svg viewBox="0 0 16 16"><path d="M5 2v12l10-6z"/><path d="M3 5v6" stroke="#333" stroke-width="2"/></svg></button>
            <button aria-label="Go to end"><svg viewBox="0 0 16 16"><path d="M2 2v12l10-6z"/><path d="M14 1v14" stroke="#333" stroke-width="2"/></svg></button>
        </div>
        <ol class="history">
            <li class="marked"><svg><use href="#i-cyl"/></svg></li>
            <li><svg><use href="#i-hole"/></svg></li>
            <li><svg><use href="#i-cyl"/></svg></li>
            <li><svg><use href="#i-cyl"/></svg></li>
            <li><svg><use href="#i-shell"/></svg></li>
            <li><svg><use href="#i-fillet"/></svg></li>
            <li><svg><use href="#i-move"/></svg></li>
            <li><svg><use href="#i-sketchedit"/></svg></li>
            <li><svg><use href="#i-torus"/></svg></li>
            <li><svg><use href="#i-move"/></svg></li>
            <li><svg><use href="#i-sweep"/></svg></li>
            <li class="marked"><svg><use href="#i-align"/></svg></li>
            <li><svg><use href="#i-copy"/></svg></li>
            <li><svg><use href="#i-copy"/></svg></li>
            <li><svg><use href="#i-copy"/></svg></li>
            <li><svg><use href="#i-move"/></svg></li>
            <li><svg><use href="#i-copy"/></svg></li>
            <li><svg><use href="#i-copy"/></svg></li>
            <li><svg><use href="#i-splitface"/></svg></li>
            <li><svg><use href="#i-copy"/></svg></li>
            <li><svg class="slashes" viewBox="0 0 16 5"><path d="M1 5l4-4M6 5l4-4M11 5l4-4" stroke="#444" stroke-width="2"/></svg><svg><use href="#i-slab"/></svg></li>
            <li><svg><use href="#i-slab"/></svg></li>
            <li class="current"><svg><use href="#i-combine"/></svg></li>
            <li class="future"><svg><use href="#i-face"/></svg></li>
            <li class="future"><svg><use href="#i-newcomp"/></svg></li>
            <li class="future"><svg><use href="#i-patch"/></svg></li>
            <li class="future"><svg><use href="#i-rib"/></svg></li>
            <li class="future"><svg><use href="#i-newcomp"/></svg></li>
        </ol>
        <button class="settings" aria-label="Timeline settings"><svg><use href="#i-gear"/></svg></button>
    </footer>
    <div class="taskbar"></div>
</body>
</html>
```
FILE: styles.css
```css
* {
    box-sizing: border-box;
}
body {
    margin: 0;
    height: 100vh;
    display: flex;
    flex-direction: column;
    overflow: hidden;
    font-family: "Liberation Sans", Arial, sans-serif;
    font-size: 11px;
    color: #333;
    background: #fff;
}
button {
    padding: 0;
    border: none;
    background: none;
    font: inherit;
    color: inherit;
    cursor: pointer;
}
svg {
    display: block;
    overflow: visible;
}
symbol {
    overflow: visible;
}
.sprite {
    position: absolute;
}
.caret {
    display: inline-block;
    width: 0;
    height: 0;
    border: 3px solid transparent;
    border-top: 4px solid #333;
    border-bottom: 0;
}

/* window tabs */
.window-tabs {
    display: flex;
    height: 7px;
    overflow: hidden;
    background: #ccc;
}
.tab-first {
    width: 13%;
}
.tab-second {
    flex: 0 0 550px;
    background: #b9b9b9;
}
.tab-gap {
    width: 4px;
}
.tab-active {
    flex: 0 0 550px;
    background: #f1f1f1;
}
.tab-new {
    width: 28px;
    background: #b9b9b9;
}
.tab-rest {
    flex: 1;
    display: flex;
    justify-content: flex-end;
    align-items: flex-end;
    padding: 0 16px 3px 0;
}
.avatar {
    width: 18px;
    height: 18px;
    border-radius: 50%;
    background: #f1f1f1;
}

/* ribbon */
.ribbon {
    display: flex;
    flex: none;
    font-family: Roboto, sans-serif;
    background: #f1f1f1;
    border-bottom: 1px solid #ddd;
}
.workspace {
    width: 110px;
    height: 62px;
    margin: 10px 0 0 11px;
    border: 2px solid #dedede;
    border-radius: 5px;
    font-weight: bold;
}
.workspace .caret {
    margin: 0 0 2px 2px;
}
.tabs {
    display: flex;
    gap: 22px;
    margin-left: 12px;
}
.tabs a {
    height: 24px;
    padding: 0 12px;
    line-height: 22px;
    color: #333;
    text-decoration: none;
}
.tabs a.active {
    color: #0696d7;
    font-weight: bold;
    border-bottom: 3px solid #1a95d3;
}
.groups {
    display: flex;
}
.group {
    padding: 0 6px 0 4px;
    text-align: center;
    background: linear-gradient(#dcdcdc, #dcdcdc) right 2px / 2px 51px no-repeat;
}
.group:last-child {
    background: none;
}
.group.single {
    padding: 0 13px;
}
.icons {
    display: flex;
    justify-content: center;
    height: 38px;
}
.icons button {
    display: flex;
    align-items: center;
    justify-content: center;
    width: 43px;
}
.icons svg {
    width: 32px;
    height: 32px;
}
.icons .on {
    width: 38px;
    margin: 0 1px 0 4px;
    color: #fff;
    background: #0696d7;
}
.menu {
    height: 19px;
    padding-top: 1px;
    white-space: nowrap;
}
.menu .caret {
    margin-bottom: 2px;
}

/* viewport */
.viewport {
    position: relative;
    flex: 1;
    min-height: 0;
    display: flex;
    flex-direction: column;
    justify-content: space-between;
    padding: 4px;
}
.canvas {
    position: absolute;
    inset: 0;
    width: 100%;
    height: 100%;
}
.dimension {
    font-size: 15px;
    fill: #333;
}
.viewcube {
    position: absolute;
    top: 17px;
    right: 18px;
}
.cube-face {
    font-size: 9px;
    font-weight: bold;
    fill: #aaa;
}
.axis-z,
.axis-x {
    font-size: 12px;
    font-weight: bold;
    fill: #8e8ef2;
}
.axis-x {
    fill: #f29a9a;
}
.browser {
    position: relative;
    width: 300px;
}
.panel-head {
    display: flex;
    align-items: center;
    height: 25px;
    padding: 0 0 0 5px;
    border: 1px solid #ddd;
    border-width: 1px 1px 2px 1px;
    border-color: #e4e4e4 #c8c8c8 #c8c8c8 #d4d4d4;
    background: #f1f1f1;
    font-family: Roboto, sans-serif;
    color: #666;
}
.grow {
    flex: 1;
    margin-left: 9px;
}
.grip {
    width: 4px;
    height: 11px;
    margin-left: 7px;
    border: 1px solid #888;
    border-width: 0 1px;
}
.tree {
    margin: 3px 0 0;
    padding: 0;
    list-style: none;
}
.tree li {
    display: flex;
    align-items: center;
    height: 24px;
    padding-left: 34px;
}
.tree .root {
    padding-left: 16px;
}
.tree .leaf {
    padding-left: 72px;
}
.toggle {
    position: relative;
    width: 20px;
    height: 14px;
    background: #333;
    clip-path: polygon(2px 0, 6px 0, 12px 7px, 6px 14px, 2px 14px);
}
.toggle::after {
    content: "";
    position: absolute;
    inset: 0;
    background: #fff;
    clip-path: polygon(3px 1px, 5px 1px, 10px 7px, 5px 13px, 3px 13px);
}
.toggle.open,
.toggle.open::after {
    clip-path: polygon(12px 1px, 12px 13px, 0 13px);
}
.toggle.open::after {
    background: linear-gradient(90deg, #ddd, #555);
    clip-path: polygon(11px 4px, 11px 12px, 3px 12px);
}
.node {
    display: flex;
    align-items: center;
    height: 20px;
    background: #f1f1f1;
}
.node svg {
    width: 16px;
    height: 16px;
}
.node .eye {
    margin: 0 6px 0 3px;
}
.node .gear {
    color: #9a9a9a;
}
.item {
    display: flex;
    align-items: center;
    gap: 14px;
    height: 20px;
    padding: 0 10px 0 3px;
    white-space: nowrap;
}
.root .item {
    height: 16px;
}
.doc {
    background: #999;
    color: #fff;
    font-weight: bold;
}
.selected {
    background: #0696d7;
    color: #fff;
    font-weight: bold;
}
.hatched {
    background: repeating-linear-gradient(125deg, #8796ad 0 2px, transparent 2px 5px) left bottom / 100% 5px no-repeat;
}
.node input {
    appearance: none;
    width: 13px;
    height: 13px;
    margin: 0 8px 0 5px;
    border: 1px solid #333;
    border-radius: 50%;
    background: radial-gradient(#222 2px, #fff 3px);
}

/* floating things on the canvas */
.hint {
    position: absolute;
    left: 442px;
    top: 428px;
    padding: 0 2px;
    border: 1px solid #666;
    background: #f1f1f1;
    font: 11px/13px "DejaVu Sans Condensed", "DejaVu Sans", sans-serif;
    color: #000;
}
.quick-input {
    position: absolute;
    left: 676px;
    top: 627px;
    display: flex;
    align-items: center;
    gap: 5px;
    height: 22px;
    padding: 0 9px 0 5px;
    background: #f1f1f1;
}
.drag {
    width: 3px;
    height: 18px;
    margin-right: 11px;
    border: 1px dotted #bbb;
    border-width: 0 1px;
}
.quick-input input {
    width: 66px;
    height: 17px;
    padding: 0;
    border: 1px solid #bbb;
    font: inherit;
    color: #333;
    text-align: center;
}
.quick-input button {
    display: flex;
    margin-right: 4px;
}
.quick-input button:last-child {
    margin: 0;
}
.quick-input svg {
    width: 16px;
    height: 16px;
}

/* dialog */
.dialog {
    position: absolute;
    top: 30px;
    right: 72px;
    width: 250px;
    border: 1px solid #c8c8c8;
    background: #f1f1f1;
}
.dialog-head {
    display: flex;
    align-items: center;
    gap: 10px;
    height: 24px;
    padding-left: 5px;
    border-bottom: 1px solid #c8c8c8;
    font-family: Roboto, sans-serif;
    color: #666;
}
.row {
    display: grid;
    grid-template-columns: 74px 1fr;
    align-items: center;
    height: 30px;
    padding: 0 14px 0 12px;
}
.pick {
    position: relative;
}
.pick svg {
    position: absolute;
    left: 3px;
    top: 5px;
    width: 16px;
    height: 16px;
}
.pick .caret {
    position: absolute;
    right: 5px;
    top: 11px;
}
.pick select {
    appearance: none;
    width: 100%;
    height: 26px;
    padding: 0 0 0 22px;
    border: 1px solid #ccc;
    border-radius: 0;
    background: #fff;
    font: inherit;
    color: #333;
}
.inline,
.types,
.combo {
    display: flex;
    align-items: center;
}
.selection {
    display: flex;
    align-items: center;
    gap: 5px;
    height: 27px;
    padding: 0 6px 0 6px;
    background: #0696d7;
    color: #fff;
    white-space: nowrap;
}
.clear {
    margin-left: 11px;
}
.types {
    gap: 6px;
}
.types button {
    display: flex;
    align-items: center;
    justify-content: center;
    width: 23px;
    height: 27px;
}
.types .on {
    background: #0696d7;
}
.types svg {
    width: 15px;
    height: 15px;
}
.combo {
    margin-left: 6px;
}
.combo input {
    width: 129px;
    height: 21px;
    padding: 0 3px;
    border: 1px solid #c4c4c4;
    font: inherit;
    color: #333;
}
.combo button {
    display: flex;
    margin-left: 2px;
}
.disabled {
    color: #b5b5b5;
}
.row input[type="checkbox"] {
    appearance: none;
    width: 13px;
    height: 13px;
    margin: 0 0 0 5px;
    border: 1px solid #999;
    border-radius: 3px;
    background: linear-gradient(#f4f4f4, #e2e2e2);
}
.dialog-foot {
    display: flex;
    align-items: center;
    gap: 10px;
    height: 37px;
    padding: 0 11px 0 8px;
    border-top: 1px solid #c8c8c8;
}
.dialog-foot svg {
    margin-right: auto;
}
.dialog-foot button {
    width: 60px;
    height: 19px;
    border: 1px solid #b5b5b5;
    background: #e9e9e9;
    font-size: 12px;
    color: #666;
}

/* bottom row */
.bottom {
    position: relative;
    display: grid;
    grid-template-columns: 1fr auto 1fr;
    align-items: end;
}
.comments {
    width: 300px;
    padding-left: 15px;
}
.navbar {
    display: flex;
    align-items: center;
    gap: 10px;
    height: 24px;
    padding: 0 11px 0 3px;
    background: #f1f1f1;
}
.navbar button {
    display: flex;
    align-items: center;
    gap: 5px;
}
.navbar svg {
    width: 16px;
    height: 16px;
}
.navbar .wide {
    gap: 2px;
    margin-right: -4px;
}
.navbar .wide:last-child {
    margin: 0;
}
.status {
    justify-self: end;
    padding: 0 34px 6px 0;
    font-weight: bold;
}

/* timeline */
.timeline {
    display: flex;
    flex: none;
    height: 50px;
    padding: 0 13px 0 9px;
    border-top: 2px solid #c8c8c8;
    background: #f1f1f1;
}
.playback {
    display: flex;
    gap: 9px;
    height: 48px;
    align-items: center;
    width: 133px;
    fill: #444;
}
.playback svg,
.settings svg {
    width: 16px;
    height: 16px;
}
.history {
    display: flex;
    height: 32px;
    margin: 10px auto 0 0;
    padding: 0;
    list-style: none;
    background: linear-gradient(#c4c4c4, #c4c4c4) 12px 100% / calc(100% - 24px) 2px no-repeat;
}
.history li {
    position: relative;
    width: 24px;
    height: 32px;
    padding: 5px 4px;
    color: #333;
    background: linear-gradient(#c4c4c4, #c4c4c4) center bottom / 2px 7px no-repeat;
}
.history svg {
    position: relative;
    width: 16px;
    height: 16px;
}
.history .marked::before {
    content: "";
    position: absolute;
    left: 0;
    top: 1px;
    width: 24px;
    height: 24px;
    background: #e6e619;
}
.history .slashes {
    position: absolute;
    left: 4px;
    top: -5px;
    height: 5px;
}
.history .current::after {
    content: "";
    position: absolute;
    right: -6px;
    top: 0;
    width: 12px;
    height: 32px;
    background: #555;
    clip-path: polygon(0 0, 100% 0, 100% 4px, 7px 8px, 7px 100%, 5px 100%, 5px 8px, 0 4px);
}
.future svg {
    opacity: 0.35;
}
.settings {
    color: #777;
}
.taskbar {
    flex: none;
    height: 4px;
    background: linear-gradient(90deg, transparent 776px, #4d5b68 776px, #4d5b68 824px, transparent 824px) #1f3340;
}
```
